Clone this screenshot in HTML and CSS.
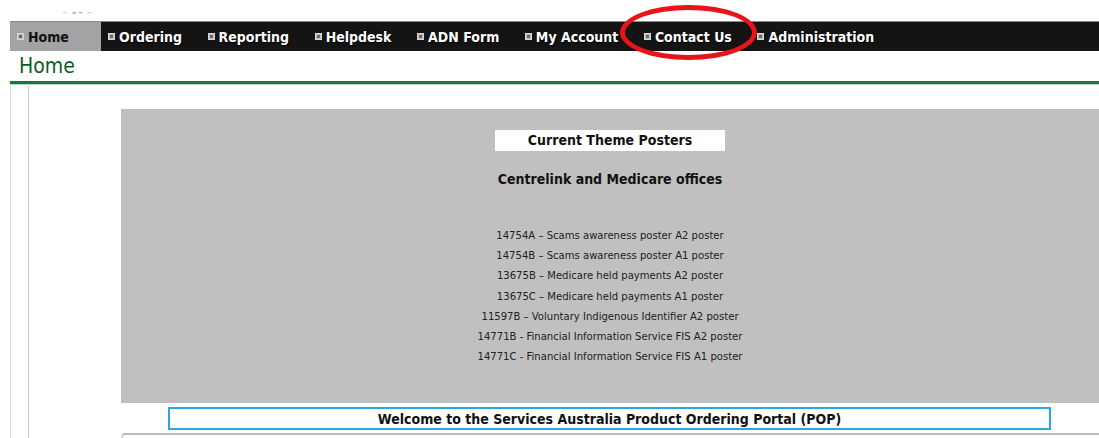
FILE: index.html
```html
<!DOCTYPE html>
<html lang="en">
<head>
<meta charset="utf-8">
<title>Home - Product Ordering Portal</title>
<link rel="stylesheet" href="styles.css">
</head>
<body>
<div class="masthead"><span class="mast-mark">~ ≈¬ ~</span></div>

<nav class="menu">
  <a class="menu-item current" href="#"><span class="bullet"></span>Home</a>
  <a class="menu-item" href="#"><span class="bullet"></span>Ordering</a>
  <a class="menu-item" href="#"><span class="bullet"></span>Reporting</a>
  <a class="menu-item" href="#"><span class="bullet"></span>Helpdesk</a>
  <a class="menu-item" href="#"><span class="bullet"></span>ADN Form</a>
  <a class="menu-item" href="#"><span class="bullet"></span>My Account</a>
  <a class="menu-item" href="#"><span class="bullet"></span>Contact Us</a>
  <a class="menu-item" href="#"><span class="bullet"></span>Administration</a>
  <span class="highlight-ring"></span>
</nav>

<h1 class="page-title">Home</h1>

<div class="frame">
  <div class="inner">
    <section class="posters">
      <div class="posters-title">Current Theme Posters</div>
      <h2 class="posters-sub">Centrelink and Medicare offices</h2>
      <ul class="poster-list">
        <li>14754A – Scams awareness poster A2 poster</li>
        <li>14754B – Scams awareness poster A1 poster</li>
        <li>13675B – Medicare held payments A2 poster</li>
        <li>13675C – Medicare held payments A1 poster</li>
        <li>11597B – Voluntary Indigenous Identifier A2 poster</li>
        <li>14771B - Financial Information Service FIS A2 poster</li>
        <li>14771C - Financial Information Service FIS A1 poster</li>
      </ul>
    </section>
    <div class="welcome">Welcome to the Services Australia Product Ordering Portal (POP)</div>
    <div class="panel-edge"></div>
  </div>
</div>
</body>
</html>
```

FILE: styles.css
```css
html, body {
  margin: 0;
  padding: 0;
  background: #fff;
  overflow: hidden;
}

body {
  font-family: "DejaVu Sans Condensed", "DejaVu Sans", Verdana, sans-serif;
  color: #111;
  width: 1099px;
  height: 438px;
}

/* top strip with the clipped logo fragment */
.masthead {
  height: 21px;
  position: relative;
}

.mast-mark {
  position: absolute;
  left: 62px;
  top: 9px;
  font-size: 7px;
  color: #999;
  letter-spacing: 1px;
}

/* main navigation bar */
.menu {
  position: relative;
  margin-left: 10px;
  height: 29px;
  background: #141414;
  border-top: 1px solid #8a8a8a;
  display: flex;
  align-items: stretch;
}

.menu-item {
  display: flex;
  align-items: center;
  gap: 4px;
  padding: 0 18.6px 0 7px;
  color: #fff;
  font-weight: bold;
  font-size: 14px;
  text-decoration: none;
  text-shadow: 1px 1px 1px #000;
  white-space: nowrap;
}

.menu-item.current {
  background: #a3a3a3;
  color: #111;
  text-shadow: none;
  width: 65px;
  padding-right: 19px;
}

.bullet {
  width: 5px;
  height: 5px;
  border: 1px solid #d8d8d8;
  background: #6a6a6a;
  box-shadow: inset 0 0 0 1px #bdbdbd;
  flex: none;
}

/* hand-drawn style ring round the contact link */
.highlight-ring {
  position: absolute;
  left: 610px;
  top: -17px;
  width: 127px;
  height: 45px;
  border: 5px solid #e8141a;
  border-radius: 50%;
  pointer-events: none;
}

.page-title {
  margin: 0 0 0 10px;
  padding: 4px 0 3px 9px;
  height: 23px;
  font-family: "DejaVu Sans Condensed", "DejaVu Sans", Verdana, sans-serif;
  font-weight: normal;
  font-size: 21px;
  line-height: 23px;
  color: #0d5e1e;
  border-bottom: 3px solid #16773a;
  box-shadow: 0 1px 0 #bcd9c3;
}

.frame {
  margin: 1px 0 0 10px;
  border-left: 1px solid #dcdcdc;
  padding-left: 17px;
  height: 360px;
}

.inner {
  border-left: 1px solid #c8c8c8;
  margin-top: 2px;
  padding: 23px 0 0 92px;
  height: 340px;
}

.posters {
  background: #c0c0c0;
  width: 978px;
  height: 273px;
  padding-top: 21px;
  text-align: center;
}

.posters-title {
  display: inline-block;
  background: #fff;
  width: 230px;
  height: 21px;
  line-height: 21px;
  font-weight: bold;
  font-size: 14px;
}

.posters-sub {
  margin: 18px 0 0;
  font-size: 14px;
  line-height: 20px;
  font-weight: bold;
}

.poster-list {
  list-style: none;
  margin: 37px 0 0;
  padding: 0;
  font-size: 11.2px;
  line-height: 20.2px;
  color: #222;
}

.welcome {
  margin: 4px 0 0 47px;
  width: 879px;
  height: 19px;
  border: 2px solid #2aa7e2;
  text-align: center;
  font-weight: bold;
  font-size: 14px;
  line-height: 20px;
}

.panel-edge {
  margin-top: 3px;
  height: 10px;
  border-top: 2px solid #bcbcbc;
  border-left: 2px solid #cfcfcf;
  border-radius: 4px 0 0 0;
}
```
